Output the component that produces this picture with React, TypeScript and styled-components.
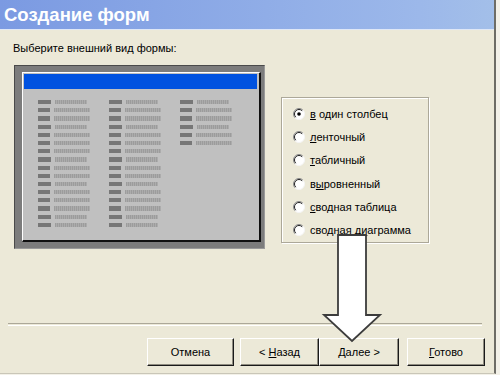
import React from "react";
import styled, { createGlobalStyle } from "styled-components";

const GlobalStyle = createGlobalStyle`
  html, body {
    margin: 0;
    padding: 0;
    background: #f3f1e8;
  }
  body {
    font-family: "Liberation Sans", Arial, sans-serif;
  }
`;

const Dialog = styled.div`
  width: 494px;
  height: 373px;
  background: #ece9d8;
  border-right: 2px solid #6e6d66;
  border-bottom: 1px solid #c9c6b8;
  display: flex;
  flex-direction: column;
  position: relative;
  overflow: hidden;
`;

const TitleBar = styled.div`
  height: 29px;
  border-bottom: 1px solid #dfe7f6;
  background: linear-gradient(to right, #7b9ae2, #9cb8ea 85%, #a3bfe9);
  color: #fff;
  font-size: 18.5px;
  font-weight: bold;
  line-height: 29px;
  padding-left: 4px;
`;

const Prompt = styled.div`
  margin: 11px 0 0 13px;
  font-size: 11px;
  line-height: 14px;
  color: #000;
`;

const Body = styled.div`
  display: flex;
  align-items: flex-start;
  margin: 10px 0 0 14px;
  height: 184px;
`;

const Frame = styled.div`
  width: 251px;
  height: 184px;
  box-sizing: border-box;
  background: #7c7c7c;
  border-top: 1px solid #4a4a4a;
  border-left: 1px solid #4a4a4a;
  border-right: 1px solid #9a9a9a;
  border-bottom: 1px solid #9a9a9a;
  padding: 6px 3px 6px 7px;
  display: flex;
`;

const Screen = styled.div`
  flex: 1;
  background: #c0c0c0;
  border-top: 1px solid #fff;
  border-left: 1px solid #fff;
  border-right: 2px solid #101010;
  border-bottom: 2px solid #101010;
  padding: 1px 2px 0 1px;
  display: flex;
  flex-direction: column;
`;

const BlueBar = styled.div`
  height: 15px;
  background: #0052e0;
`;

const Columns = styled.div`
  display: flex;
  margin: 11px 0 0 14px;
  gap: 19px;
`;

const Column = styled.div`
  display: flex;
  flex-direction: column;
  gap: 4px;
  width: 52px;
`;

const FieldRow = styled.div`
  display: flex;
  gap: 4px;
  height: 4.2px;
`;

const FieldLabel = styled.div`
  width: 13px;
  background: #777;
`;

const FieldBox = styled.div<{ $long: boolean }>`
  width: ${(p) => (p.$long ? 40 : 32)}px;
  background: repeating-linear-gradient(
    90deg,
    #9c9c9c 0px,
    #9c9c9c 1px,
    #acacac 1px,
    #acacac 2px
  );
`;

const Group = styled.div`
  margin: 32px 0 0 16px;
  width: 148px;
  height: 146px;
  box-sizing: border-box;
  border: 1px solid #aca899;
  box-shadow: inset 1px 1px 0 #fff, 1px 1px 0 #fff;
  padding: 4px 0 0 11px;
  display: flex;
  flex-direction: column;
`;

const Option = styled.label`
  display: flex;
  align-items: center;
  gap: 5px;
  height: 23.3px;
  font-size: 11px;
  color: #000;
`;

const Key = styled.span`
  text-decoration: underline;
`;

const Separator = styled.div`
  margin: 74px 12px 0 8px;
  height: 1px;
  border-top: 1px solid #aca899;
  border-bottom: 1px solid #fff;
`;

const Buttons = styled.div`
  display: flex;
  justify-content: flex-end;
  margin: 12px 9px 0 0;
`;

const Button = styled.button<{ $w: number; $gap?: number }>`
  width: ${(p) => p.$w}px;
  height: 28px;
  margin-left: ${(p) => p.$gap ?? 0}px;
  background: #ece9d8;
  border: none;
  border-top: 1px solid #fff;
  border-left: 1px solid #fff;
  border-right: 1px solid #1a1a1a;
  border-bottom: 1px solid #1a1a1a;
  box-shadow: inset -1px -1px 0 #8f8c80;
  font-family: "Liberation Sans", Arial, sans-serif;
  font-size: 11px;
  color: #000;
  padding: 0;
`;

const Arrow = styled.svg`
  position: absolute;
  left: 320px;
  top: 232px;
`;

const RadioIcon = styled.svg`
  flex: none;
  display: block;
`;

const Radio = ({ checked }: { checked?: boolean }) => (
  <RadioIcon width="12" height="12" viewBox="0 0 12 12">
    <circle cx="6" cy="6" r="5.5" fill="#fff" />
    <path d="M2.1 9.9 A5.5 5.5 0 0 1 9.9 2.1" fill="none" stroke="#8a8a8a" strokeWidth="1" />
    <path d="M2.8 9.2 A4.5 4.5 0 0 1 9.2 2.8" fill="none" stroke="#222" strokeWidth="1" />
    <path d="M9.9 2.1 A5.5 5.5 0 0 1 2.1 9.9" fill="none" stroke="#f4f4f4" strokeWidth="1" />
    {checked && <circle cx="6" cy="6" r="1.8" fill="#000" />}
  </RadioIcon>
);

const pattern = [0, 1, 1, 0, 1, 1, 1, 0, 1, 1, 0, 1, 1, 1, 0, 0];
const columns = [pattern, pattern, pattern.slice(0, 6)];

const options: [string, string, string][] = [
  ["", "в", " один столбец"],
  ["", "л", "енточный"],
  ["", "т", "абличный"],
  ["в", "ы", "ровненный"],
  ["", "с", "водная таблица"],
  ["сводная д", "и", "аграмма"],
];

export default function App() {
  return (
    <>
      <GlobalStyle />
      <Dialog>
        <TitleBar>Создание форм</TitleBar>
        <Prompt>Выберите внешний вид формы:</Prompt>
        <Body>
          <Frame>
            <Screen>
              <BlueBar />
              <Columns>
                {columns.map((col, i) => (
                  <Column key={i}>
                    {col.map((l, j) => (
                      <FieldRow key={j}>
                        <FieldLabel />
                        <FieldBox $long={l === 1} />
                      </FieldRow>
                    ))}
                  </Column>
                ))}
              </Columns>
            </Screen>
          </Frame>
          <Group>
            {options.map(([pre, key, post], i) => (
              <Option key={i}>
                <Radio checked={i === 0} />
                <span>
                  {pre}
                  <Key>{key}</Key>
                  {post}
                </span>
              </Option>
            ))}
          </Group>
        </Body>
        <Separator />
        <Buttons>
          <Button $w={87}>Отмена</Button>
          <Button $w={79} $gap={6}>
            &lt; <Key>Н</Key>азад
          </Button>
          <Button $w={80}>
            <Key>Д</Key>алее &gt;
          </Button>
          <Button $w={78} $gap={8}>
            <Key>Г</Key>отово
          </Button>
        </Buttons>
        <Arrow width="64" height="112" viewBox="0 0 64 112">
          <path
            d="M18 3 H46 V83 H60 L32 109 L4 83 H18 Z"
            fill="#fff"
            stroke="#3c3c3c"
            strokeWidth="1.8"
            strokeLinejoin="miter"
          />
        </Arrow>
      </Dialog>
    </>
  );
}
